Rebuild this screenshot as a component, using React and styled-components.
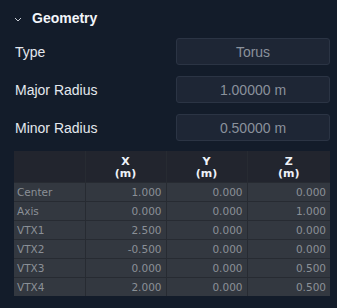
import React from "react";
import styled, { createGlobalStyle } from "styled-components";

const GlobalStyle = createGlobalStyle`
  html, body {
    margin: 0;
    padding: 0;
    background: #131c2a;
  }
  body {
    font-family: "Liberation Sans", Arial, sans-serif;
  }
`;

/* 面板 */
const Panel = styled.div`
  width: 337px;
  height: 308px;
  box-sizing: border-box;
  padding: 0 7px 0 14px;
  background: #131c2a;
`;

const Header = styled.div`
  display: flex;
  align-items: center;
  height: 38px;
  gap: 10px;
  padding-bottom: 2px;
  box-sizing: border-box;
  color: #f2f5fa;
  font-size: 14px;
  font-weight: 700;
`;

const Fields = styled.div`
  display: flex;
  flex-direction: column;
  gap: 11px;
`;

const Row = styled.div`
  display: flex;
  align-items: center;
  justify-content: space-between;
  height: 27px;
`;

const Label = styled.div`
  padding-left: 1px;
  color: #e4e8ee;
  font-size: 14px;
`;

const Value = styled.div`
  width: 154px;
  height: 27px;
  box-sizing: border-box;
  display: flex;
  align-items: center;
  justify-content: center;
  border: 1px solid #2b3444;
  border-radius: 3px;
  background: #1e2635;
  color: #8a919c;
  font-size: 14px;
`;

const Table = styled.table`
  margin-top: 10px;
  width: 316px;
  border-collapse: collapse;
  table-layout: fixed;
  font-family: "DejaVu Sans", Verdana, sans-serif;
  font-size: 10.5px;

  th, td {
    border: 1px solid #272b32;
    padding: 0 4px;
  }

  tr:first-child th {
    border-top: none;
  }
  tr > *:first-child {
    border-left: none;
  }
  tr > *:last-child {
    border-right: none;
  }
  tr:last-child td {
    border-bottom: none;
  }
`;

const HeadCell = styled.th`
  height: 31px;
  padding-top: 3px !important;
  background: #22252e;
  color: #eef2f8;
  font-size: 11px;
  font-weight: 700;
  line-height: 12px;
  text-align: center;
  box-sizing: border-box;
`;

const Cell = styled.td`
  height: 18px;
  background: #333840;
  color: #8b9097;
  text-align: ${(p) => (p.$label ? "left" : "right")};
  padding-left: ${(p) => (p.$label ? "3px" : "4px")} !important;
`;

const Chevron = () => (
  <svg width="8" height="5" viewBox="0 0 8 5" style={{ marginTop: 2 }}>
    <path d="M1 1 L4 4 L7 1" fill="none" stroke="#c9ced6" strokeWidth="1" />
  </svg>
);

const rows = [
  ["Center", "1.000", "0.000", "0.000"],
  ["Axis", "0.000", "0.000", "1.000"],
  ["VTX1", "2.500", "0.000", "0.000"],
  ["VTX2", "-0.500", "0.000", "0.000"],
  ["VTX3", "0.000", "0.000", "0.500"],
  ["VTX4", "2.000", "0.000", "0.500"],
];

const fields = [
  ["Type", "Torus"],
  ["Major Radius", "1.00000 m"],
  ["Minor Radius", "0.50000 m"],
];

export default function App() {
  return (
    <Panel>
      <GlobalStyle />
      <Header>
        <Chevron />
        Geometry
      </Header>
      <Fields>
        {fields.map(([k, v]) => (
          <Row key={k}>
            <Label>{k}</Label>
            <Value>{v}</Value>
          </Row>
        ))}
      </Fields>
      <Table>
        <colgroup>
          <col style={{ width: 71 }} />
          <col style={{ width: 81 }} />
          <col style={{ width: 81 }} />
          <col style={{ width: 83 }} />
        </colgroup>
        <thead>
          <tr>
            <HeadCell />
            {["X", "Y", "Z"].map((a) => (
              <HeadCell key={a}>
                {a}
                <br />
                (m)
              </HeadCell>
            ))}
          </tr>
        </thead>
        <tbody>
          {rows.map((r) => (
            <tr key={r[0]}>
              <Cell $label>{r[0]}</Cell>
              <Cell>{r[1]}</Cell>
              <Cell>{r[2]}</Cell>
              <Cell>{r[3]}</Cell>
            </tr>
          ))}
        </tbody>
      </Table>
    </Panel>
  );
}
